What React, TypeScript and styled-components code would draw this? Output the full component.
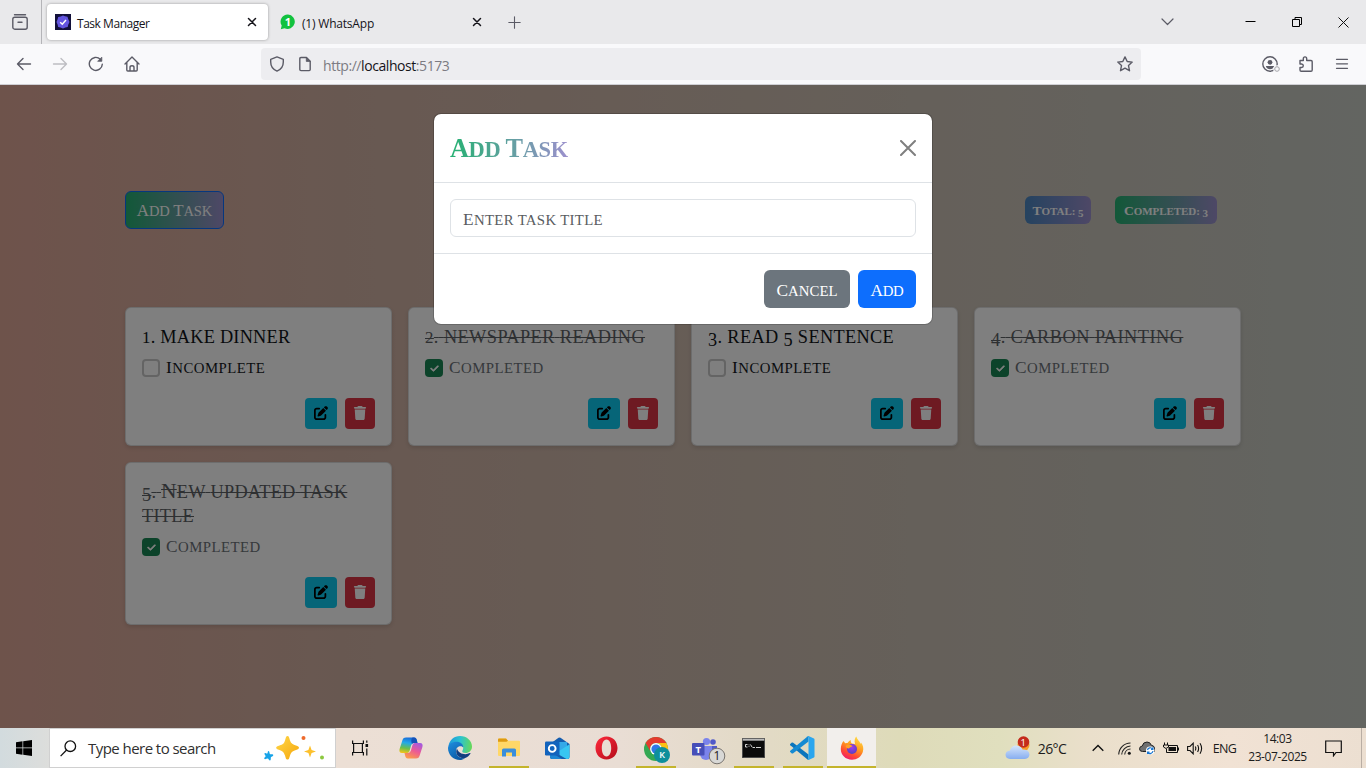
import React from "react";
import styled, { createGlobalStyle } from "styled-components";
import { FaPenToSquare, FaTrash, FaCheck } from "react-icons/fa6";

const GlobalStyle = createGlobalStyle`
  *, *::before, *::after { box-sizing: border-box; }
  body { margin: 0; background: #fff; }
  svg { display: block; flex: none; }
`;

const ui = `"Open Sans", "Noto Sans", sans-serif`;
const serif = `"Liberation Serif", "Times New Roman", serif`;

const Screen = styled.div`
  width: 1366px;
  height: 768px;
  display: flex;
  flex-direction: column;
  overflow: hidden;
  font-family: ${ui};
`;

/* ---------- small caps text ---------- */

const Caps = styled.span`
  text-transform: uppercase;
`;

const Capital = styled.span<{ $strike?: boolean }>`
  display: inline-block;
  text-decoration: ${(p) => (p.$strike ? "line-through" : "none")};
  text-decoration-thickness: 1px;
  &::first-letter { font-size: 1.17em; line-height: 0; }
`;

/* Old-style figures: 1 and 2 sit on the baseline, 3 to 5 drop below it. */
const Figure = styled.span<{ $low: boolean }>`
  line-height: 0;
  vertical-align: ${(p) => (p.$low ? "-0.17em" : "baseline")};
  font-size: ${(p) => (p.$low ? 1 : 0.92)}em;
`;

function renderWord(word: string, strike?: boolean) {
  if (/^\d/.test(word)) {
    return <><Figure $low={word[0] > "2"}>{word[0]}</Figure>{word.slice(1)}</>;
  }
  return /[A-Z]/.test(word[0]) ? <Capital $strike={strike}>{word}</Capital> : word;
}

function SmallCaps({ text, strike }: { text: string; strike?: boolean }) {
  return (
    <Caps>
      {text.split(" ").map((word, i) => (
        <React.Fragment key={i}>
          {i > 0 && " "}
          {renderWord(word, strike)}
        </React.Fragment>
      ))}
    </Caps>
  );
}

/* ---------- browser chrome ---------- */

const TabStrip = styled.div`
  height: 44px;
  flex: none;
  display: flex;
  align-items: center;
  background: #e9e9eb;
`;

const RecentButton = styled.div`
  width: 42px;
  height: 44px;
  flex: none;
  display: flex;
  align-items: center;
  justify-content: center;
  padding-right: 2px;
  border-right: 1px solid #b4b4b8;
`;

const Tab = styled.div<{ $active?: boolean }>`
  width: 221px;
  height: 36px;
  margin-left: ${(p) => (p.$active ? 5 : 4)}px;
  padding: 0 11px 0 8px;
  display: flex;
  align-items: center;
  border-radius: 4px;
  background: ${(p) => (p.$active ? "#fff" : "transparent")};
  box-shadow: ${(p) => (p.$active ? "0 0 3px rgba(0,0,0,.35)" : "none")};
  font-size: 12px;
  color: #15141a;
`;

const TabLabel = styled.span<{ $tracking: number }>`
  margin-left: 6px;
  padding-top: 2px;
  flex: 1;
  white-space: nowrap;
  letter-spacing: ${(p) => p.$tracking}px;
`;

const WindowButtons = styled.div`
  margin-left: auto;
  display: flex;
  align-items: center;
  padding-right: 17px;
`;

const WindowGlyph = styled.div<{ $gap: number }>`
  margin-left: ${(p) => p.$gap}px;
`;

const Toolbar = styled.div`
  height: 41px;
  flex: none;
  display: flex;
  align-items: center;
  padding: 0 16px;
  background: #f9f9fb;
  border-bottom: 1px solid #cfcfd4;
`;

const NavIcons = styled.div`
  display: flex;
  gap: 20px;
  width: 245px;
`;

const AddressBar = styled.div`
  width: 880px;
  height: 32px;
  display: flex;
  align-items: center;
  padding: 0 8px;
  border-radius: 4px;
  background: #ededf0;
  font-size: 14px;
  color: #7c7b82;
`;

const Url = styled.span`
  margin-left: 10px;
  padding-top: 2px;
  flex: 1;
  letter-spacing: -0.43px;
  b { font-weight: 400; color: #15141a; }
`;

const FileIconBox = styled.div`
  margin-left: 12px;
`;

const ToolIcons = styled.div`
  margin-left: auto;
  display: flex;
  gap: 20px;
  svg { overflow: visible; }
`;

const stroke = { fill: "none", stroke: "#5b5b66", strokeWidth: 1.4, strokeLinecap: "round", strokeLinejoin: "round" } as const;

const CloseGlyph = () => (
  <svg width="10" height="10" viewBox="0 0 10 10" stroke="#15141a" strokeWidth="1.5" strokeLinecap="round">
    <path d="M1.5 1.5l7 7M8.500 1.5L1.5 8.500" />
  </svg>
);

/* ---------- page ---------- */

const Page = styled.main`
  position: relative;
  height: 643px;
  flex: none;
  background: linear-gradient(to right, #dda697 0%, #d1b1a3 25%, #ccbeb1 60%, #c6cac3 100%);
  font-family: ${serif};
  color: #212529;
`;

const Container = styled.div`
  width: 1116px;
  margin: 0 auto;
  padding-top: 106px;
`;

const TopRow = styled.div`
  display: flex;
  justify-content: space-between;
  align-items: center;
  padding-right: 24px;
  margin-bottom: 78px;
`;

const AddTaskButton = styled.button`
  width: 99px;
  height: 38px;
  padding: 2px 0 0;
  border: 1px solid #0d6efd;
  border-radius: 6px;
  background: linear-gradient(to right, #25b172, #9c90cd);
  font: 14.5px ${serif};
  letter-spacing: -0.1px;
  color: #fff;
  white-space: nowrap;
`;

const Badges = styled.div`
  display: flex;
  gap: 24px;
`;

const Badge = styled.span<{ $from: string; $width: number }>`
  width: ${(p) => p.$width}px;
  height: 28px;
  padding-top: 1px;
  display: flex;
  align-items: center;
  justify-content: center;
  border-radius: 6px;
  background: linear-gradient(to right, ${(p) => p.$from}, #9c90cd);
  font-size: 11px;
  font-weight: 700;
  letter-spacing: -0.05px;
  color: #fff;
  white-space: nowrap;
  ${Capital}::first-letter { font-size: 13.5px; }
`;

const CardGrid = styled.div`
  display: grid;
  grid-template-columns: repeat(4, 267px);
  gap: 16px;
`;

const Card = styled.article`
  padding: 16px;
  border: 1px solid rgba(0, 0, 0, 0.14);
  border-radius: 6px;
  background: #fff;
  box-shadow: 0 2px 4px rgba(0, 0, 0, 0.12);
`;

const CardTitle = styled.h5<{ $done?: boolean; $tracking: number }>`
  margin: 0 -6px 8px 0;
  padding-top: 1px;
  font-size: 18.3px;
  line-height: 24px;
  font-weight: 400;
  letter-spacing: ${(p) => p.$tracking}px;
  color: ${(p) => (p.$done ? "#5d6165" : "#101418")};
  text-decoration: ${(p) => (p.$done ? "line-through" : "none")};
  text-decoration-thickness: 1px;
`;

const CheckRow = styled.label<{ $done?: boolean }>`
  height: 24px;
  margin-bottom: 17px;
  display: flex;
  align-items: center;
  gap: 6px;
  padding-bottom: 2px;
  font-size: 14.8px;
  letter-spacing: 0.48px;
  color: ${(p) => (p.$done ? "#6c7278" : "#14181c")};
  ${Caps} { padding-top: 1px; }
`;

const CheckBox = styled.span<{ $done?: boolean }>`
  width: 18px;
  height: 18px;
  display: flex;
  align-items: center;
  justify-content: center;
  border-radius: 4px;
  border: ${(p) => (p.$done ? "0" : "2px solid #c8c8c8")};
  background: ${(p) => (p.$done ? "#198754" : "#fff")};
  color: #fff;
  svg { stroke: #fff; stroke-width: 40px; }
`;

const CardActions = styled.div`
  display: flex;
  justify-content: flex-end;
  gap: 8px;
`;

const IconButton = styled.button<{ $kind: "edit" | "delete" }>`
  width: ${(p) => (p.$kind === "edit" ? 32 : 30)}px;
  height: 31px;
  padding: 0 0 1px;
  display: flex;
  align-items: center;
  justify-content: center;
  border: 0;
  border-radius: 4px;
  background: ${(p) => (p.$kind === "edit" ? "#0dcaf0" : "#dc3545")};
  color: ${(p) => (p.$kind === "edit" ? "#000" : "#fff")};
`;

const Backdrop = styled.div`
  position: absolute;
  inset: 0;
  display: flex;
  justify-content: center;
  align-items: flex-start;
  padding-top: 28px;
  background: rgba(0, 0, 0, 0.5);
`;

const Dialog = styled.section`
  width: 500px;
  height: 212px;
  border: 1px solid rgba(0, 0, 0, 0.175);
  border-radius: 8px;
  background: #fff;
  background-clip: padding-box;
`;

const DialogHeader = styled.header`
  height: 69px;
  display: flex;
  align-items: center;
  justify-content: space-between;
  padding: 0 16px;
  border-bottom: 1px solid #dee2e6;
`;

const DialogTitle = styled.h4`
  margin: 4px 0 0;
  font-size: 22.5px;
  line-height: 34px;
  font-weight: 700;
  letter-spacing: -0.4px;
  background: linear-gradient(to right, #25b172, #9c90cd);
  background-clip: text;
  -webkit-background-clip: text;
  color: transparent;
`;

const DialogBody = styled.div`
  padding: 16px;
`;

const Field = styled.div`
  height: 38px;
  display: flex;
  align-items: center;
  padding: 4px 12px 0;
  border: 1px solid #dee2e6;
  border-radius: 6px;
  font-size: 14.8px;
  letter-spacing: 0.33px;
  color: #595c5f;
`;

const DialogFooter = styled.footer`
  display: flex;
  justify-content: flex-end;
  gap: 8px;
  padding: 16px;
  border-top: 1px solid #dee2e6;
`;

const DialogButton = styled.button<{ $primary?: boolean }>`
  width: ${(p) => (p.$primary ? 58 : 86)}px;
  height: 38px;
  padding: 5px 0 0;
  border: 0;
  border-radius: 6px;
  background: ${(p) => (p.$primary ? "#0d6efd" : "#6c757d")};
  color: #fff;
  font: 14.8px ${serif};
  letter-spacing: ${(p) => (p.$primary ? -0.3 : 0.05)}px;
`;

/* ---------- taskbar ---------- */

const Taskbar = styled.footer`
  height: 40px;
  flex: none;
  display: flex;
  background: linear-gradient(to right, #d2dbde 0, #dfdedb 60px, #ecdfd5 340px, #e9ddd4 620px, #e3dac8 740px, #dedbb9 900px, #e0dfbe 1000px, #eadfcb 1090px, #f1e2d4 1230px, #ecdfd1 100%);
`;

const Start = styled.div`
  width: 49px;
  padding-right: 1px;
  display: flex;
  align-items: center;
  justify-content: center;
`;

const SearchBox = styled.div`
  width: 287px;
  height: 40px;
  display: flex;
  align-items: center;
  padding: 0 10px 0 10px;
  background: #fff;
  border: 1px solid #d0d0d0;
  font-size: 15px;
  letter-spacing: -0.55px;
  color: #303030;
  span { margin-left: 11px; flex: 1; white-space: nowrap; }
`;

const AppSlot = styled.div<{ $active?: boolean; $open?: boolean }>`
  width: 49px;
  height: 40px;
  display: flex;
  align-items: center;
  justify-content: center;
  background-color: ${(p) => (p.$active ? "#f2efec" : "transparent")};
  background-image: ${(p) => (p.$open || p.$active ? "linear-gradient(#c4b42c, #c4b42c)" : "none")};
  background-repeat: no-repeat;
  background-position: center bottom;
  background-size: ${(p) => (p.$active ? "100%" : "40px")} 2px;
`;

const TaskViewSlot = styled(AppSlot)`
  width: 50px;
  padding-right: 2px;
`;

const ChromeSlot = styled(AppSlot)`
  padding: 3px 0 0 3px;
`;

const TeamsSlot = styled(AppSlot)`
  padding: 5px 0 0 9px;
`;

const Tray = styled.div`
  margin-left: auto;
  width: 361px;
  display: flex;
  align-items: center;
  font-size: 12.5px;
  color: #1c1c1c;
`;

const TraySlot = styled.div<{ $w: number }>`
  width: ${(p) => p.$w}px;
  flex: none;
  display: flex;
  align-items: center;
  justify-content: center;
  white-space: nowrap;
`;

const Temperature = styled(TraySlot)`
  font-size: 14px;
  letter-spacing: -0.6px;
`;

const Language = styled(TraySlot)`
  letter-spacing: -0.6px;
`;

const Clock = styled(TraySlot)`
  flex-direction: column;
  font-size: 12px;
  line-height: 18px;
  letter-spacing: -0.4px;
`;

const ShowDesktop = styled.div`
  margin-left: auto;
  width: 5px;
  height: 40px;
  border-left: 1px solid #b9aea4;
`;

const badgeText = { fontFamily: "Open Sans, sans-serif", textAnchor: "middle" } as const;

const WindowsLogo = () => (
  <svg width="16" height="16" viewBox="0 0 16 16" fill="#000">
    <path d="M0 2.2L6.5 1.3V7.6H0zM7.2 1.2L16 0V7.6H7.2zM0 8.3H6.5V14.7L0 13.8zM7.2 8.3H16V16L7.2 14.8z" />
  </svg>
);

const SearchGlyph = () => (
  <svg width="17" height="17" viewBox="0 0 17 17" fill="none" stroke="#111" strokeWidth="1.3">
    <circle cx="10.3" cy="6.2" r="5.3" /><path d="M6.6 10L.6 16.1" />
  </svg>
);

const Sparkles = () => (
  <svg width="62" height="28" viewBox="0 0 62 28">
    <defs>
      <linearGradient id="spark" x1="0" y1="0" x2="1" y2="1"><stop offset="0" stopColor="#ffd84a" /><stop offset="1" stopColor="#f5a60b" /></linearGradient>
    </defs>
    <path d="M24.500 2C26 2 26.200 4 27 6.500C28 9.500 30 10.500 33 11.500C37 12.700 37 14.800 33 16C29 17.200 28.200 18.500 27 21.500C26 25 26 25.500 24.500 25.500S23 25 22 21.500C20.800 18.500 20 17.200 16.500 16C12 14.800 12 12.700 16.500 11.500C20 10.500 21 9.500 22 6.500C22.800 4 23 2 24.500 2Z" fill="url(#spark)" />
    <path d="M47 11.500L48.600 16L53 17.500L48.600 19L47 23.500L45.400 19L41 17.500L45.400 16Z" fill="#fcc02c" />
    <path d="M5.500 17C6.700 17 6.300 20 7.300 20.300C8.600 20.300 10.300 19.800 10.300 21.200C10.300 22.300 7.800 22.600 7.800 23.600C7.800 25 8 26.500 6.800 26.500C5.600 26.500 5.800 24.700 4.600 24.600C3.300 24.700 1.800 25.800 1.200 24.600C.800 23.500 2.800 22.900 2.600 21.900C2.300 20.900 .800 20 1.700 19.200C2.600 18.700 3.600 20 4.300 19.600C5 19 4.500 17 5.500 17Z" fill="#17a3e8" />
    <circle cx="40.500" cy="4" r="2" fill="#ee6a2c" />
    <circle cx="59" cy="23.500" r="2" fill="#8cc840" />
  </svg>
);

const TaskView = () => (
  <svg width="17" height="16" viewBox="0 0 17 16" fill="none" stroke="#111" strokeWidth="1.200">
    <path d="M.600 .500V3.500H11.400V.500M.600 15.500V12.500H11.400V15.500M1.600 3.500V12.500M10.400 3.500V12.500M14.800 .500V2.800M14.800 8.500V15.500" />
    <rect x="13.500" y="4" width="2.600" height="3" fill="#111" stroke="none" />
  </svg>
);

const Copilot = () => (
  <svg width="24" height="22" viewBox="0 0 24 22">
    <defs>
      <linearGradient id="cpa" x1=".5" y1="0" x2=".3" y2="1"><stop offset="0" stopColor="#1a6bd8" /><stop offset=".35" stopColor="#23a9e8" /><stop offset=".7" stopColor="#6bbf4b" /><stop offset="1" stopColor="#f2c31a" /></linearGradient>
      <linearGradient id="cpb" x1=".8" y1="0" x2=".3" y2="1"><stop offset="0" stopColor="#a35ae0" /><stop offset=".5" stopColor="#ec5a95" /><stop offset="1" stopColor="#fb9b4a" /></linearGradient>
    </defs>
    <path d="M7 .500H15C17 .500 17.600 2 18 4L18.500 6H15.500C13 6 12.500 7.200 11.800 9.500L10.500 14C10 15.600 9 16 7.500 16H3C.500 16 0 14 .600 12L3.500 3C4 1.300 5.200 .500 7 .500Z" fill="url(#cpa)" />
    <path d="M13.500 .500H15C17 .500 17.600 2 18 4L18.500 6H15.500C14 6 13.500 6.300 13 7C12 5 12 2 13.500 .500Z" fill="#1552b8" />
    <path d="M17 21.500H9C7 21.500 6.400 20 6 18L5.500 16H8.500C11 16 11.500 14.800 12.200 12.500L13.500 8C14 6.400 15 6 16.500 6H21C23.500 6 24 8 23.400 10L20.500 19C20 20.700 18.800 21.500 17 21.500Z" fill="url(#cpb)" />
  </svg>
);

const Edge = () => (
  <svg width="24" height="24" viewBox="0 0 24 24">
    <defs>
      <linearGradient id="ea" x1="0" y1=".3" x2="1" y2=".4"><stop offset="0" stopColor="#1d96dc" /><stop offset=".5" stopColor="#2cc3cf" /><stop offset="1" stopColor="#66d85a" /></linearGradient>
      <linearGradient id="eb" x1="0" y1="0" x2=".6" y2="1"><stop offset="0" stopColor="#1f8fe0" /><stop offset="1" stopColor="#0c59a4" /></linearGradient>
    </defs>
    <path d="M.500 10C1.500 4 6 0 12 0C19 0 24 5 24 10.500C24 14.500 21 17 17.500 17C14.500 17 13.800 15.800 14.500 14.500C17 10 13 7 9 7C5 7 2 8.500 .500 10Z" fill="url(#ea)" />
    <path d="M0 12C.500 8 4 5.800 8.500 5.800C12.500 5.800 15.500 8.400 15.200 11.500C13.500 9 8 10 8 15C8 19.500 12 23 17 22C15.500 23.500 13.500 24 12 24C5 24 0 18.500 0 12Z" fill="url(#eb)" />
    <path d="M9 12.500C6.500 17 10 22.500 16.500 22.200C19 21.500 21.300 19.700 22.500 17.500C22.700 17 22.300 16.800 21.800 17.100C17.500 19.500 10.500 18 9 12.500Z" fill="#123f80" />
  </svg>
);

const Folder = () => (
  <svg width="22" height="20" viewBox="0 0 22 20">
    <path d="M0 1.500Q0 .500 1 .500H8L10 2.800H21Q22 2.800 22 3.800V17Q22 18 21 18H1Q0 18 0 17Z" fill="#ffd767" />
    <path d="M0 1.500Q0 .500 1 .500H8L10 2.800L8.500 3.800H0Z" fill="#dd9a12" />
    <path d="M4 18.500V12Q4 10.500 5.500 10.500H16.500Q18 10.500 18 12V18.500H14V14.500H8V18.500Z" fill="#3a8edb" />
  </svg>
);

const Outlook = () => (
  <svg width="25" height="22" viewBox="0 0 25 22">
    <path d="M5 7L13.500 .800Q14.500 0 15.500 .800L24.500 7V20Q24.500 22 22.500 22H7Q5 22 5 20Z" fill="#155dae" />
    <path d="M7.500 5H22V14L15 18L7.500 13Z" fill="#35a9e8" />
    <path d="M24.500 7.200L11 16L21.500 22H22.500Q24.500 22 24.500 20Z" fill="#38c6f2" />
    <path d="M5 15L17 22H7Q5 22 5 20Z" fill="#1d86d4" />
    <rect x="0" y="4.500" width="14.500" height="14" rx="1.300" fill="#1263bd" />
    <circle cx="7.200" cy="11.500" r="3.400" fill="none" stroke="#fff" strokeWidth="1.900" />
  </svg>
);

const Opera = () => (
  <svg width="23" height="24" viewBox="0 0 23 24">
    <defs><linearGradient id="op" x1="0" y1="0" x2="1" y2="1"><stop offset="0" stopColor="#ff2b3d" /><stop offset="1" stopColor="#b30c1a" /></linearGradient></defs>
    <path fillRule="evenodd" fill="url(#op)" d="M11.500 .500C18 .500 22.500 5.500 22.500 12S18 23.500 11.500 23.500S.500 18.500 .500 12S5 .500 11.500 .500ZM11.500 3.500C8.500 3.500 6.800 7.500 6.800 12S8.500 20.500 11.500 20.500S16.200 16.500 16.200 12S14.500 3.500 11.500 3.500Z" />
  </svg>
);

const Chrome = () => (
  <svg width="26" height="26" viewBox="0 0 26 26">
    <circle cx="12" cy="12" r="12" fill="#34a853" />
    <path d="M1.600 6A12 12 0 0 1 22.400 6H12A6 6 0 0 0 6.800 15Z" fill="#e33b2e" />
    <path d="M22.400 6A12 12 0 0 1 12 24L17.200 15A6 6 0 0 0 12 6Z" fill="#fbc116" />
    <circle cx="12" cy="12" r="5.900" fill="#fff" /><circle cx="12" cy="12" r="4.600" fill="#2f78e6" />
    <circle cx="18" cy="18" r="8" fill="#0e8f9c" />
    <text x="18" y="21.200" fontSize="9" fontWeight="600" fill="#fff" {...badgeText}>K</text>
  </svg>
);

const Teams = () => (
  <svg width="34" height="28" viewBox="0 0 34 28">
    <circle cx="21" cy="5" r="2.800" fill="#5059c9" /><circle cx="14.500" cy="4.500" r="3.600" fill="#7b83eb" />
    <path d="M17 9H25V16A4 4 0 0 1 17 17Z" fill="#5059c9" />
    <path d="M8 9H20V17A6 6 0 0 1 8 17Z" fill="#7b83eb" />
    <rect x="0" y="6" width="12.500" height="12.500" rx="1" fill="#464eb8" />
    <text x="6.200" y="15.800" fontSize="9.500" fontWeight="700" fill="#fff" {...badgeText}>T</text>
    <circle cx="25" cy="19" r="7.800" fill="#d8d8d6" stroke="#77736f" />
    <text x="25" y="23.200" fontSize="12" fill="#222" {...badgeText}>1</text>
  </svg>
);

const Terminal = () => (
  <svg width="23" height="20" viewBox="0 0 23 20">
    <rect width="23" height="20" rx="1" fill="#0b0b0b" /><rect x=".500" y=".500" width="22" height="2.200" fill="#b9b9b9" />
    <path d="M5.500 6.500H3.500V9H5.500M7 6.500V7.300M7 8.300V9M8.500 6.500L10 9M10.500 9.500H13M14 9.500H19" fill="none" stroke="#e8e8e8" strokeWidth=".900" />
    <rect x=".400" y=".400" width="22.200" height="19.200" rx="1" fill="none" stroke="#666" strokeWidth=".800" />
  </svg>
);

const VsCode = () => (
  <svg width="25" height="24" viewBox="0 0 25 24">
    <path d="M0 8.200L1.800 6.600Q2.500 6.300 3.200 6.800L18.500 18.500V24L17.500 23.500L.300 9.300Q-.200 8.700 0 8.200Z" fill="#0a75bd" />
    <path d="M0 15.800L1.800 17.400Q2.500 17.700 3.200 17.200L18.500 5.500V0L17.500 .500L.300 14.700Q-.200 15.300 0 15.800Z" fill="#148ad2" />
    <path d="M17.500 .300L18.500 0L24 2.500Q24.500 2.800 24.500 3.500V20.500Q24.500 21.200 24 21.500L18.500 24L17.500 23.700Q18.500 23.500 18.500 22V2Q18.500 .700 17.500 .300Z" fill="#2aa6ee" />
  </svg>
);

const Firefox = () => (
  <svg width="24" height="24" viewBox="0 0 24 24">
    <defs>
      <linearGradient id="ff" x1=".8" y1="0" x2=".3" y2="1"><stop offset="0" stopColor="#ffe14a" /><stop offset=".45" stopColor="#ff9a1e" /><stop offset=".75" stopColor="#ff4a35" /><stop offset="1" stopColor="#ee1a6a" /></linearGradient>
      <radialGradient id="fg" cx=".5" cy=".35" r=".6"><stop offset="0" stopColor="#a03de8" /><stop offset="1" stopColor="#5c3fc4" /></radialGradient>
    </defs>
    <path d="M3.500 5L5.200 7.200Q6.300 6.700 7.500 7Q9 4.500 11 4C10.500 5 10.800 6.500 12 7.500L15 8C14 4.500 15 1.500 16.500 .500C17 4 20 5 20.500 8L21 6.500C23 9 24 12 22.800 16C21 21 17 23.700 12 23.700C5.500 23.700 .800 19 .800 13C.800 9.500 2 7 3.500 5Z" fill="url(#ff)" />
    <circle cx="12" cy="13" r="5" fill="url(#fg)" />
    <path d="M5.500 10C7.500 8 10.500 8.500 12.500 10C11.500 11.500 9.500 11 9 12.500C8 12.500 6 12 5.500 10Z" fill="#ffa127" />
  </svg>
);

const Weather = () => (
  <svg width="26" height="24" viewBox="0 0 26 24">
    <defs><linearGradient id="cl" x1="0" y1="0" x2="0" y2="1"><stop offset="0" stopColor="#d5e5fb" /><stop offset="1" stopColor="#87aef0" /></linearGradient></defs>
    <circle cx="18.500" cy="9" r="6" fill="#f59a29" />
    <path d="M5 23Q.500 22.500 .500 18.500Q.800 15 5 14.500Q6.500 9.500 11.500 9.500Q16 9.500 17.500 13.500Q24 13.500 24.500 18.500Q24 22.500 20 23Z" fill="url(#cl)" />
    <circle cx="18.500" cy="6" r="5.800" fill="#c42b1c" />
    <text x="18.300" y="9.500" fontSize="9.500" fill="#fff" {...badgeText}>1</text>
  </svg>
);

type Task = { id: number; title: string; done: boolean; tracking: number };

const tasks: Task[] = [
  { id: 1, title: "make dinner", done: false, tracking: 0.24 },
  { id: 2, title: "newspaper reading", done: true, tracking: 0.43 },
  { id: 3, title: "read 5 sentence", done: false, tracking: 0.35 },
  { id: 4, title: "carbon painting", done: true, tracking: 0.48 },
  { id: 5, title: "New updated task title", done: true, tracking: 0.25 },
];

function TaskCard({ task }: { task: Task }) {
  return (
    <Card>
      <CardTitle $done={task.done} $tracking={task.tracking}>
        <SmallCaps text={`${task.id}. ${task.title}`} strike={task.done} />
      </CardTitle>
      <CheckRow $done={task.done}>
        <CheckBox $done={task.done}>{task.done && <FaCheck size={9} />}</CheckBox>
        <SmallCaps text={task.done ? "Completed" : "Incomplete"} />
      </CheckRow>
      <CardActions>
        <IconButton $kind="edit"><FaPenToSquare size={14} /></IconButton>
        <IconButton $kind="delete"><FaTrash size={14} /></IconButton>
      </CardActions>
    </Card>
  );
}

export default function App() {
  return (
    <Screen>
      <GlobalStyle />
      <TabStrip>
        <RecentButton>
          <svg width="16" height="16" viewBox="0 0 16 16" {...stroke}>
            <path d="M2.500 .800H13.500" /><rect x=".800" y="3.300" width="14.400" height="11.900" rx="2" /><path d="M6 8.200H10" />
          </svg>
        </RecentButton>
        <Tab $active>
          <svg width="16" height="16" viewBox="0 0 16 16">
            <rect width="16" height="16" fill="#12103a" />
            <path d="M8 1.500L10 2.200L12.500 2.700L13.200 5L14.500 8L13.300 10.500L12.700 13L10.300 13.600L8 14.600L5.500 13.600L3.200 13L2.600 10.500L1.500 8L2.600 5.300L3.200 3L5.700 2.400Z" fill="#6355e0" />
            <path d="M5.200 8.200L7.300 10.200L11 6" fill="none" stroke="#fff" strokeWidth="1.500" />
          </svg>
          <TabLabel $tracking={-0.46}>Task Manager</TabLabel>
          <CloseGlyph />
        </Tab>
        <Tab>
          <svg width="16" height="16" viewBox="0 0 16 16">
            <path d="M8 .500A7.200 7.200 0 1 1 4.500 14.200L.800 15.200L1.700 11.500A7.200 7.200 0 0 1 8 .500Z" fill="#12c23f" />
            <text x="7.800" y="11.800" fontSize="11" fontWeight="700" fill="#fff" {...badgeText}>1</text>
          </svg>
          <TabLabel $tracking={-0.2}>(1) WhatsApp</TabLabel>
          <CloseGlyph />
        </Tab>
        <WindowGlyph $gap={15}>
          <svg width="13" height="13" viewBox="0 0 13 13" {...stroke} strokeWidth="1.100"><path d="M6.500 .800V12.200M.800 6.500H12.200" /></svg>
        </WindowGlyph>
        <WindowButtons>
          <WindowGlyph $gap={0}>
            <svg width="13" height="8" viewBox="0 0 13 8" {...stroke} strokeWidth="1.200"><path d="M1 1L6.500 6.500L12 1" /></svg>
          </WindowGlyph>
          <WindowGlyph $gap={71}>
            <svg width="11" height="10" viewBox="0 0 11 10"><rect x=".500" y="4" width="10" height="1" fill="#000" /></svg>
          </WindowGlyph>
          <WindowGlyph $gap={36}>
            <svg width="11" height="10" viewBox="0 0 11 10" fill="none" stroke="#000"><path d="M.500 2.500H7.500V9.500H.500ZM3 2.500V.500H9.500V7.500H7.500" /></svg>
          </WindowGlyph>
          <WindowGlyph $gap={35}>
            <svg width="11" height="11" viewBox="0 0 11 11" stroke="#111"><path d="M.500 .500L10.500 10.500M10.500 .500L.500 10.500" /></svg>
          </WindowGlyph>
        </WindowButtons>
      </TabStrip>

      <Toolbar>
        <NavIcons>
          <svg width="16" height="16" viewBox="0 0 16 16" {...stroke}><path d="M14.500 8H1.500M7 2.500L1.500 8L7 13.500" /></svg>
          <svg width="16" height="16" viewBox="0 0 16 16" {...stroke} stroke="#bdbdc2"><path d="M1.500 8H14.500M9 2.500L14.500 8L9 13.500" /></svg>
          <svg width="16" height="16" viewBox="0 0 16 16" {...stroke}><path d="M14.300 8.200A6.500 6.500 0 1 1 12.300 3.200" /><path d="M13.800 1.500V5.300H10Z" fill="#5b5b66" strokeWidth=".800" /></svg>
          <svg width="16" height="16" viewBox="0 0 16 16" {...stroke}><path d="M1 8L8 1L15 8M2.800 6.500V14Q2.800 15 3.800 15H12.200Q13.200 15 13.200 14V6.500M6 15V11.500Q6 9.800 8 9.800T10 11.500V15" /></svg>
        </NavIcons>
        <AddressBar>
          <svg width="16" height="16" viewBox="0 0 16 16" {...stroke}><path d="M8 .900L14.300 3.300V6C14.300 10 12 13.500 8 15.100C4 13.500 1.700 10 1.700 6V3.300Z" /></svg>
          <FileIconBox>
            <svg width="16" height="16" viewBox="0 0 16 16" {...stroke}><path d="M4 1.500H9.500L13.200 5.200V13.500Q13.200 14.600 12.200 14.600H4Q2.800 14.600 2.800 13.500V2.700Q2.800 1.500 4 1.500Z" /><path d="M9.300 1.700V5.400H13Z" fill="#5b5b66" strokeWidth=".800" /></svg>
          </FileIconBox>
          <Url>http://<b>localhost</b>:5173</Url>
          <svg width="16" height="16" viewBox="0 0 16 16" {...stroke}><path d="M8 .900L10.200 5.500L15.200 6.100L11.500 9.600L12.500 14.700L8 12.200L3.500 14.700L4.500 9.600L.800 6.100L5.800 5.500Z" /></svg>
        </AddressBar>
        <ToolIcons>
          <svg width="16" height="16" viewBox="0 0 16 16">
            <circle cx="8" cy="8" r="7.200" {...stroke} /><circle cx="8" cy="6.300" r="2.400" fill="#5b5b66" />
            <path d="M3.800 10H12.200Q11 13.200 8 13.200T3.800 10Z" fill="#5b5b66" />
            <circle cx="15" cy="13" r="3.800" fill="#f9f9fb" /><circle cx="15" cy="13" r="2.300" fill="none" stroke="#a5a5ab" />
          </svg>
          <svg width="16" height="16" viewBox="0 0 16 16" {...stroke}><path d="M2 4.500H5.300V2.800Q5.300 .900 7 .900T8.700 2.800V4.500H13Q14.200 4.500 14.200 5.700V14Q14.200 15.200 13 15.200H3.200Q2 15.200 2 14V11.500H3.500Q5.300 11.500 5.300 9.800T3.500 8H2Z" /></svg>
          <svg width="16" height="16" viewBox="0 0 16 16" {...stroke} strokeWidth="1.300"><path d="M2.500 3.300H13.500M2.500 7.800H13.500M2.500 12.300H13.500" /></svg>
        </ToolIcons>
      </Toolbar>

      <Page>
        <Container>
          <TopRow>
            <AddTaskButton><SmallCaps text="Add Task" /></AddTaskButton>
            <Badges>
              <Badge $from="#4a86c0" $width={66}><SmallCaps text="Total: 5" /></Badge>
              <Badge $from="#25b172" $width={102}><SmallCaps text="Completed: 3" /></Badge>
            </Badges>
          </TopRow>
          <CardGrid>
            {tasks.map((t) => <TaskCard key={t.id} task={t} />)}
          </CardGrid>
        </Container>
        <Backdrop>
          <Dialog>
            <DialogHeader>
              <DialogTitle><SmallCaps text="Add Task" /></DialogTitle>
              <svg width="16" height="16" viewBox="0 0 16 16" stroke="#7f7f7f" strokeWidth="2" strokeLinecap="round"><path d="M1 1L15 15M15 1L1 15" /></svg>
            </DialogHeader>
            <DialogBody>
              <Field><SmallCaps text="Enter task title" /></Field>
            </DialogBody>
            <DialogFooter>
              <DialogButton><SmallCaps text="Cancel" /></DialogButton>
              <DialogButton $primary><SmallCaps text="Add" /></DialogButton>
            </DialogFooter>
          </Dialog>
        </Backdrop>
      </Page>

      <Taskbar>
        <Start><WindowsLogo /></Start>
        <SearchBox><SearchGlyph /><span>Type here to search</span><Sparkles /></SearchBox>
        <TaskViewSlot><TaskView /></TaskViewSlot>
        <AppSlot><Copilot /></AppSlot>
        <AppSlot><Edge /></AppSlot>
        <AppSlot $open><Folder /></AppSlot>
        <AppSlot><Outlook /></AppSlot>
        <AppSlot><Opera /></AppSlot>
        <ChromeSlot $open><Chrome /></ChromeSlot>
        <TeamsSlot><Teams /></TeamsSlot>
        <AppSlot $open><Terminal /></AppSlot>
        <AppSlot $open><VsCode /></AppSlot>
        <AppSlot $active><Firefox /></AppSlot>
        <Tray>
          <TraySlot $w={26}><Weather /></TraySlot>
          <Temperature $w={42}>26°C</Temperature>
          <TraySlot $w={50}>
            <svg width="12" height="8" viewBox="0 0 12 8" fill="none" stroke="#111" strokeWidth="1.400"><path d="M.700 6.800L6 1.500L11.300 6.800" /></svg>
          </TraySlot>
          <TraySlot $w={3}>
            <svg width="13" height="13" viewBox="0 0 13 13" fill="none" stroke="#222" strokeWidth="1.100"><path d="M.700 12.500A12 12 0 0 1 12.500 1M3.700 12.500A9 9 0 0 1 12.500 4M6.700 12.500A6 6 0 0 1 12.500 7" /><circle cx="11.300" cy="11.300" r="1.500" fill="#111" stroke="none" /></svg>
          </TraySlot>
          <TraySlot $w={42}>
            <svg width="16" height="14" viewBox="0 0 16 14"><path d="M3.500 10.500Q.500 10.500 .500 7.800Q.600 5.300 3.300 5Q4 1 8 1Q11.300 1 12.300 4.200Q15 4.500 15.500 7V10.500Z" fill="#707070" stroke="#222" /><rect x="7" y="5.500" width="8.500" height="8" rx="4" fill="#fff" /><path d="M8.500 9A2.900 2.900 0 0 1 13.700 8M14 10A2.900 2.900 0 0 1 8.900 11.500M13.900 6.300V8.300H12M8.600 13V11.200H10.500" fill="none" stroke="#1976d2" strokeWidth="1.200" /></svg>
          </TraySlot>
          <TraySlot $w={5}>
            <svg width="16" height="12" viewBox="0 0 16 12" fill="none" stroke="#111"><path d="M5 3.500H14.500V10.500H3.500V7M15.500 5.500V8.500M1.500 .500V3M4.500 .500V3M.500 3H5.500V5L3 6.500L.500 5Z" /><rect x="5.500" y="5" width="7.500" height="4" fill="#111" stroke="none" /></svg>
          </TraySlot>
          <TraySlot $w={44}>
            <svg width="17" height="13" viewBox="0 0 17 13" fill="none" stroke="#111" strokeWidth="1.100"><path d="M.600 4.500H3L6.200 1.200V11.800L3 8.500H.600ZM8.300 4.600Q9.300 6.500 8.300 8.400M10.600 3Q12.600 6.500 10.600 10M13 1.300Q16.200 6.500 13 11.700" /></svg>
          </TraySlot>
          <Language $w={15}>ENG</Language>
          <Clock $w={91}><span>14:03</span><span>23-07-2025</span></Clock>
          <TraySlot $w={20}>
            <svg width="17" height="17" viewBox="0 0 17 17" fill="none" stroke="#111" strokeWidth="1.200"><path d="M.700 1H16.300V12.500H11L8.500 15.800V12.500H.700Z" /></svg>
          </TraySlot>
          <ShowDesktop />
        </Tray>
      </Taskbar>
    </Screen>
  );
}
